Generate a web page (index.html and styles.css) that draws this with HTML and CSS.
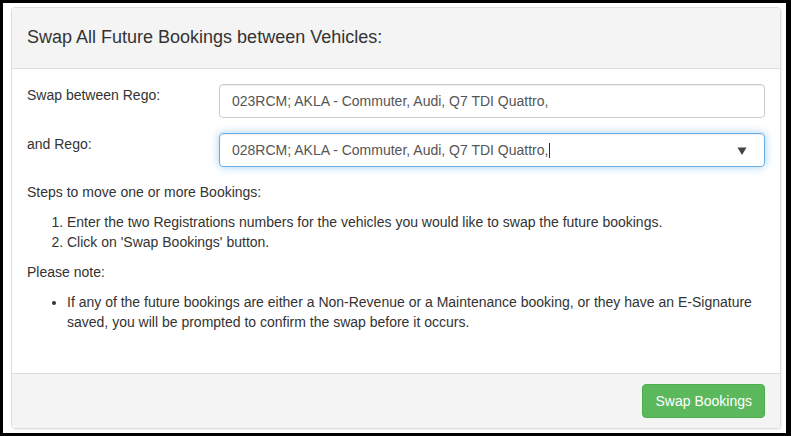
FILE: index.html
```html
<!DOCTYPE html>
<html>
<head>
<meta charset="utf-8">
<link rel="stylesheet" href="styles.css">
</head>
<body>
<div class="frame">
  <div class="panel">
    <div class="panel-header">
      <h4 class="panel-title">Swap All Future Bookings between Vehicles:</h4>
    </div>
    <div class="panel-body">
      <div class="form-row">
        <label class="form-label">Swap between Rego:</label>
        <div class="form-field">
          <div class="form-control">023RCM; AKLA - Commuter, Audi, Q7 TDI Quattro,</div>
        </div>
      </div>
      <div class="form-row">
        <label class="form-label">and Rego:</label>
        <div class="form-field">
          <div class="form-control focused">
            <span class="value">028RCM; AKLA - Commuter, Audi, Q7 TDI Quattro,</span><span class="caret"></span>
            <svg class="dropdown-arrow" width="10" height="8" viewBox="0 0 10 8"><polygon points="0.5,0.5 9.5,0.5 5,8" fill="#444"/></svg>
          </div>
        </div>
      </div>
      <p class="text">Steps to move one or more Bookings:</p>
      <ol class="list">
        <li>Enter the two Registrations numbers for the vehicles you would like to swap the future bookings.</li>
        <li>Click on 'Swap Bookings' button.</li>
      </ol>
      <p class="text">Please note:</p>
      <ul class="list">
        <li>If any of the future bookings are either a Non-Revenue or a Maintenance booking, or they have an E-Signature saved, you will be prompted to confirm the swap before it occurs.</li>
      </ul>
    </div>
    <div class="panel-footer">
      <button class="btn-success">Swap Bookings</button>
    </div>
  </div>
</div>
</body>
</html>
```
FILE: styles.css
```css
html, body {
  margin: 0;
  padding: 0;
  background: #000;
}
body {
  font-family: "Liberation Sans", Arial, Helvetica, sans-serif;
  font-size: 14px;
  line-height: 20px;
  color: #333;
}
.frame {
  margin: 3px 5px 3px 3px;
  height: 430px;
  background: #fff;
  padding: 4px 5px 4px 8px;
  box-sizing: border-box;
}
.panel {
  height: 100%;
  box-sizing: border-box;
  border: 1px solid #ddd;
  border-radius: 4px;
  display: flex;
  flex-direction: column;
  overflow: hidden;
  box-shadow: 1px 1px 1px rgba(0, 0, 0, 0.06);
}
.panel-header {
  background: #f4f4f4;
  border-bottom: 1px solid #ddd;
  padding: 16px 15px 18px;
}
.panel-title {
  margin: 0;
  font-size: 18px;
  font-weight: normal;
  line-height: 26px;
  color: #333;
}
.panel-body {
  flex: 1;
  padding: 15px 15px 0;
}
.form-row {
  display: grid;
  grid-template-columns: 177px 1fr;
  column-gap: 15px;
  margin-bottom: 15px;
}
.form-label {
  display: block;
  padding-top: 1px;
}
.form-control {
  height: 34px;
  box-sizing: border-box;
  border: 1px solid #ccc;
  border-radius: 4px;
  padding: 6px 12px;
  color: #555;
  display: flex;
  align-items: center;
  box-shadow: inset 0 1px 1px rgba(0, 0, 0, 0.075);
  white-space: nowrap;
}
.form-control.focused {
  border-color: #66afe9;
  box-shadow: inset 0 1px 1px rgba(0, 0, 0, 0.075), 0 0 8px rgba(102, 175, 233, 0.6);
}
.caret {
  display: inline-block;
  width: 1px;
  height: 15px;
  background: #333;
  margin-left: 1px;
}
.dropdown-arrow {
  margin-left: auto;
  margin-right: 5px;
  margin-top: 2px;
}
.text {
  margin: 0 0 10px;
}
.list {
  margin: 0 0 10px;
  padding-left: 40px;
}
.panel-footer {
  background: #f4f4f4;
  border-top: 1px solid #ddd;
  padding: 10px 15px;
  display: flex;
  justify-content: flex-end;
}
.btn-success {
  font-family: inherit;
  font-size: 14px;
  line-height: 20px;
  color: #fff;
  background: #5cb85c;
  border: 1px solid #4cae4c;
  border-radius: 4px;
  padding: 6px 12px;
  height: 34px;
}
```
